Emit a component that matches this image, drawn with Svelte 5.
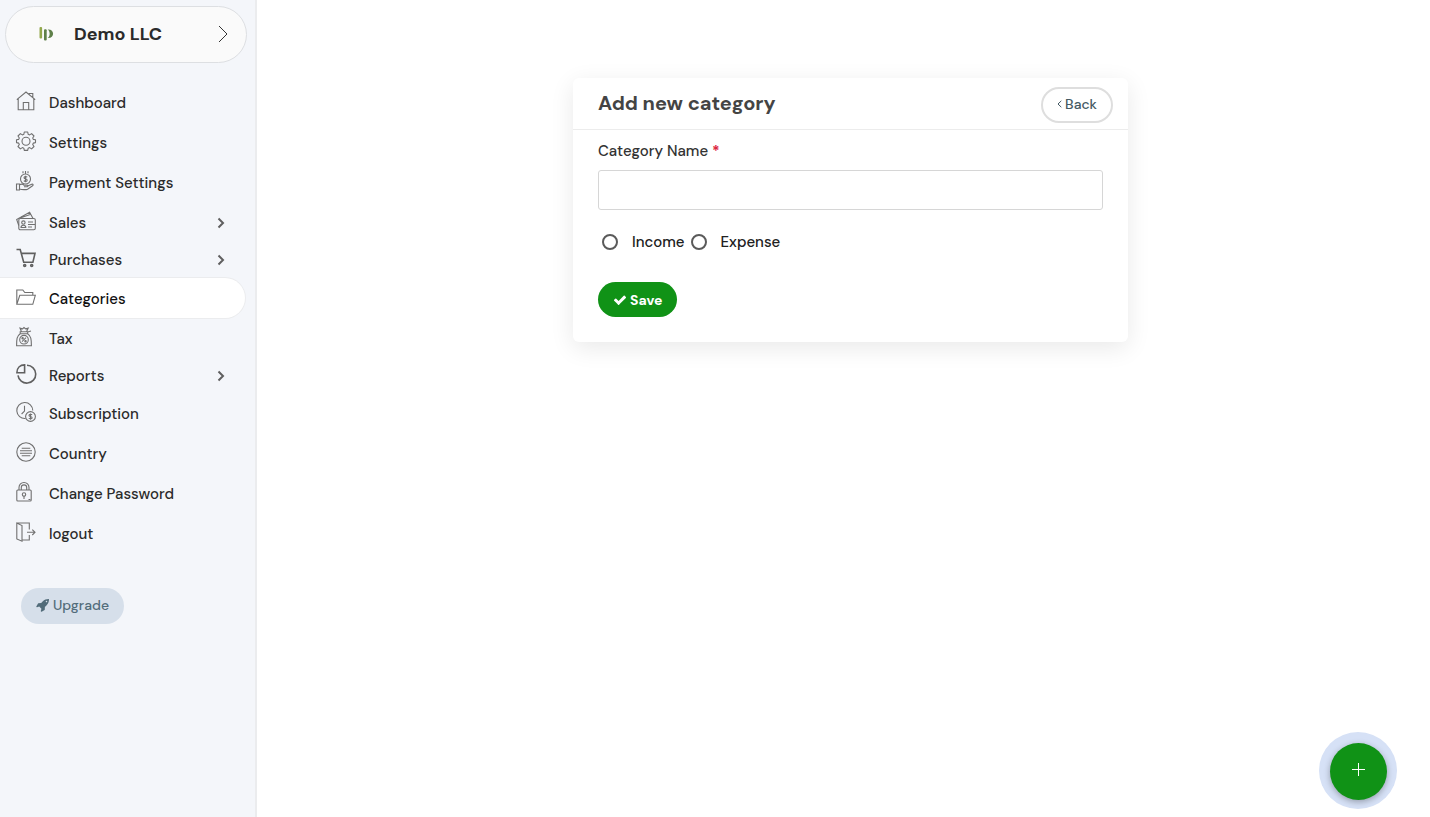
<script lang="ts">
  interface NavItem {
    label: string;
    icon: string;
    active?: boolean;
    submenu?: boolean;
    compact?: boolean;
  }

  const items: NavItem[] = [
    { label: 'Dashboard', icon: 'home' },
    { label: 'Settings', icon: 'gear' },
    { label: 'Payment Settings', icon: 'payment' },
    { label: 'Sales', icon: 'sales', submenu: true },
    { label: 'Purchases', icon: 'cart', submenu: true, compact: true },
    { label: 'Categories', icon: 'folder', active: true },
    { label: 'Tax', icon: 'tax' },
    { label: 'Reports', icon: 'chart', submenu: true, compact: true },
    { label: 'Subscription', icon: 'subscription' },
    { label: 'Country', icon: 'country' },
    { label: 'Change Password', icon: 'lock' },
    { label: 'logout', icon: 'logout' }
  ];

  let categoryName = $state('');
  let categoryType = $state('');
</script>

{#snippet navIcon(name: string)}
  <svg class="nav-icon" class:bold={name === 'cart' || name === 'chart'} viewBox="0 0 20 20" aria-hidden="true">
    {#if name === 'home'}
      <path d="M.8 8.6 10 1l9.2 7.6M2.2 7.6v11.1h15.6V7.6M7.3 18.7v-7.2h5.4v7.2M13.2 3.6V2.5h3.6v4" />
    {:else if name === 'gear'}
      <path d="M8.300 1h3.400l.5 2.300 1.400.6 2-1.300L18 5l-1.300 2 .6 1.400 2.200.4v2.800l-2.200.5-.6 1.400 1.300 2-2.400 2.400-2-1.300-1.400.6-.5 2.200H8.300l-.5-2.200-1.400-.6-2 1.300L2 15.500l1.300-2-.6-1.400-2.200-.5V8.800l2.200-.4L3.300 7 2 5l2.400-2.400 2 1.300 1.400-.6z" stroke-linejoin="round" />
      <circle cx="10" cy="10.200" r="4" />
    {:else if name === 'payment'}
      <circle cx="9.500" cy="8" r="5" />
      <path d="M7 .3v2M9.500 0v3M12 .3v2M11.200 6.200C10.600 5.300 8 5.300 8 6.800c0 1.400 3.200.8 3.200 2.400 0 1.400-2.600 1.500-3.300.4M9.500 4.700v6.600M.5 13h3v6h-3zM3.500 13.800c2-1 3.700-.7 4.700.5h3c1 0 1 1.500 0 1.500H8M11.700 15l4-1.700c1.300-.5 2 .7.900 1.400l-5 3.500c-1.200.6-5.600.7-8.100-.2" />
    {:else if name === 'sales'}
      <rect x="2.800" y="7.500" width="16.500" height="11.300" rx="1.500" />
      <path d="M2.800 14.500.7 8.600 13.600 1.300l3.300 5.900M3.400 7.200l10.800-3.600M5 16.500c0-3 4.800-3 4.800 0zM12 11h5M12 13.500h7M12 16h4" />
      <circle cx="7.400" cy="11.600" r="1.700" />
    {:else if name === 'cart'}
      <path d="M.5 1.500h3.700l3.500 12.700h9.200L19 5.400H5.400" />
      <circle cx="8.700" cy="17.500" r="1" />
      <circle cx="15.700" cy="17.500" r="1" />
    {:else if name === 'folder'}
      <path d="M.8 17.300V3h6l2 2.500h8v2.800M.8 17.300l3-9h15.500l-2.500 9z" />
    {:else if name === 'tax'}
      <path d="M4.200 6.800h7.400c3.400 2.300 3.800 5.500 3.800 12H.6c0-6.500.2-9.700 3.600-12zM4.200 4.800h7.500v2H4.200zM5.500 4.800 4 1.200l2.500.7L8 .5l1.700 1.400 2.500-.7-1.700 3.600M11.500 5l3.500-1" />
      <circle cx="8" cy="12.700" r="4.300" />
      <path d="m6 14.700 4-4" />
      <circle cx="6.600" cy="11.200" r=".7" />
      <circle cx="9.500" cy="14.200" r=".7" />
    {:else if name === 'chart'}
      <path d="M11 1.300A8.900 8.900 0 1 1 2 11.300M8.600.9C4 .9.900 4 .9 8.700h7.700z" />
    {:else if name === 'subscription'}
      <path d="M9.500 16.500a8 8 0 1 1 7.300-8M8.500 3.800v5.300L5.600 12" />
      <circle cx="14.500" cy="14.500" r="4.900" />
      <path d="M16.100 12.900c-.7-1-3.100-.8-3.100.5 0 1.500 3.100.7 3.100 2.300 0 1.400-2.600 1.400-3.200.3M14.500 11.500v6.200" />
    {:else if name === 'country'}
      <circle cx="10" cy="10" r="9.200" />
      <path d="M5.700 6.200h8.600M4 8.700h12M4 11.300h12M5.700 13.800h8.600" />
    {:else if name === 'lock'}
      <rect x=".8" y="8" width="14.400" height="11" rx="1" />
      <path d="M3 8V5.500a5 5 0 0 1 10 0V8M5.300 8V5.600a2.700 2.700 0 0 1 5.400 0V8M8 14v3M12.500 17.500h2" />
      <circle cx="8" cy="12.500" r="1.700" />
    {:else}
      <path d="M6 16.500v2.700L.8 17V1L6 3.500v13M.8 1h12.500v6.500M13.300 13v5H6M11 10.300h8M16.300 7.600l2.700 2.700-2.700 2.700" />
    {/if}
  </svg>
{/snippet}

<div class="layout">
  <aside class="sidebar">
    <button class="company" type="button">
      <svg class="logo" viewBox="0 0 16 16" aria-hidden="true">
        <rect x="1.500" y="1" width="2.600" height="11.500" rx="1" fill="#93a84c" />
        <rect x="6" y="3.300" width="2.700" height="11.200" rx="1" fill="#5f8049" />
        <path d="M9.700 3.500c7.200-.5 7.200 9 0 8.500 2.600-1.600 2.600-6.900 0-8.500z" fill="#5f8049" />
      </svg>
      <span class="company-name">Demo LLC</span>
      <svg class="company-arrow" viewBox="0 0 10 18" aria-hidden="true">
        <path d="m1 1 8 8-8 8" />
      </svg>
    </button>

    <nav>
      <ul>
        {#each items as item (item.label)}
          <li>
            <a href="#{item.icon}" class="nav-link" class:active={item.active} class:compact={item.compact}>
              {@render navIcon(item.icon)}
              <span class="nav-label">{item.label}</span>
              {#if item.submenu}
                <svg class="chevron" viewBox="0 0 8 12" aria-hidden="true">
                  <path d="m1.500 1.500 4.500 4.500-4.500 4.500" />
                </svg>
              {/if}
            </a>
          </li>
        {/each}
      </ul>
    </nav>

    <a href="#upgrade" class="upgrade">
      <svg viewBox="0 0 1792 1792" aria-hidden="true">
        <path d="M1440 448q0-40-28-68t-68-28-68 28-28 68 28 68 68 28 68-28 28-68zm224-288q0 249-75.500 430.500t-253.500 360.500q-81 80-195 176l-20 379q-2 16-16 26l-384 224q-7 4-16 4-12 0-23-9l-64-64q-13-14-8-32l85-276-281-281-276 85q-3 1-9 1-14 0-23-9l-64-64q-17-19-5-39l224-384q10-14 26-16l379-20q96-114 176-195 188-187 358-258t431-71q14 0 24 9.500t10 22.500z" />
      </svg>
      Upgrade
    </a>
  </aside>

  <main>
    <section class="card">
      <header class="card-header">
        <h1>Add new category</h1>
        <a href="#back" class="back">
          <svg viewBox="0 0 5 8" aria-hidden="true"><path d="M4.300.8 1 4l3.300 3.200" /></svg>
          Back
        </a>
      </header>

      <form class="card-body" onsubmit={(e) => e.preventDefault()}>
        <label class="field-label" for="category-name">Category Name <span class="required">*</span></label>
        <input id="category-name" class="text-input" type="text" bind:value={categoryName} />

        <div class="radios">
          <label class="radio">
            <input type="radio" name="type" value="income" bind:group={categoryType} />
            Income
          </label>
          <label class="radio">
            <input type="radio" name="type" value="expense" bind:group={categoryType} />
            Expense
          </label>
        </div>

        <button class="save" type="submit">
          <svg viewBox="0 0 1792 1792" aria-hidden="true">
            <path d="M1671 566q0 40-28 68l-724 724-136 136q-28 28-68 28t-68-28l-136-136-362-362q-28-28-28-68t28-68l136-136q28-28 68-28t68 28l294 295 656-657q28-28 68-28t68 28l136 136q28 28 28 68z" />
          </svg>
          Save
        </button>
      </form>
    </section>
  </main>

  <div class="fab-ring">
    <button class="fab" type="button" aria-label="Add">
      <svg viewBox="0 0 13 13" aria-hidden="true"><path d="M6.500 0v13M0 6.500h13" /></svg>
    </button>
  </div>
</div>

<style>
  :global(body) {
    margin: 0;
    background: #fff;
  }

  .layout {
    display: flex;
    min-height: 100vh;
    font-family: "DM Sans", Inter, sans-serif;
    font-size: 15px;
    line-height: 20px;
    color: #2b2b2b;
  }

  .layout * {
    box-sizing: border-box;
  }

  button,
  input {
    font: inherit;
  }

  a {
    color: inherit;
    text-decoration: none;
  }

  svg {
    flex-shrink: 0;
  }

  .sidebar {
    width: 257px;
    flex-shrink: 0;
    padding-top: 6px;
    background: #f4f6fa;
    border-right: 2px solid #ebecee;
  }

  .company {
    display: flex;
    align-items: center;
    width: 242px;
    height: 57px;
    margin: 0 0 19px 5px;
    padding: 0 18px 1px 32px;
    background: #fafafa;
    border: 1px solid #dddfe2;
    border-radius: 30px;
    color: #2b2b2b;
    cursor: pointer;
  }

  .logo {
    width: 16px;
    height: 16px;
    margin-right: 20px;
  }

  .company-name {
    flex: 1;
    text-align: left;
    font-size: 18px;
    font-weight: 700;
  }

  .company-arrow {
    width: 10px;
    height: 18px;
    fill: none;
    stroke: #333;
  }

  ul {
    margin: 0;
    padding: 0;
    list-style: none;
  }

  .nav-link {
    display: flex;
    align-items: center;
    margin-right: 10px;
    padding: 11px 20px 9px 16px;
    border-radius: 0 20px 20px 0;
    font-weight: 500;
  }

  .nav-link.compact {
    padding-top: 8px;
    padding-bottom: 7px;
  }

  .nav-link.active {
    margin-top: 1px;
    background: #fff;
    box-shadow: 0 0 0 1px #ebecee;
    color: #111;
  }

  .nav-icon {
    width: 20px;
    height: 20px;
    margin: -4px 13px 0 0;
    fill: none;
    stroke: #707070;
    stroke-width: 1.1;
    overflow: visible;
  }

  .nav-icon.bold {
    stroke: #606060;
    stroke-width: 1.6;
  }

  .nav-label {
    flex: 1;
  }

  .chevron {
    width: 8px;
    height: 12px;
    fill: none;
    stroke: #5f5f5f;
    stroke-width: 2;
  }

  .upgrade {
    display: inline-flex;
    align-items: center;
    gap: 3px;
    height: 36px;
    margin: 35px 0 0 21px;
    padding: 0 15px 2px;
    border-radius: 18px;
    background: #d6dfea;
    color: #526c7a;
    font-size: 14px;
    font-weight: 500;
  }

  .upgrade svg,
  .save svg {
    width: 14px;
    height: 14px;
    fill: currentColor;
  }

  main {
    flex: 1;
    padding: 78px 0 0 14px;
  }

  .card {
    max-width: 555px;
    margin: 0 auto;
    background: #fff;
    border-radius: 6px;
    box-shadow: 0 6px 24px rgba(0, 0, 0, 0.09);
  }

  .card-header {
    display: flex;
    align-items: center;
    justify-content: space-between;
    height: 52px;
    padding: 2px 15px 0 25px;
    border-bottom: 1px solid #ececec;
  }

  h1 {
    margin: 0 0 4px;
    font-size: 20px;
    font-weight: 700;
    line-height: 24px;
    color: #444;
  }

  .back {
    display: flex;
    align-items: center;
    gap: 3px;
    height: 36px;
    padding: 0 14px 2px;
    border: 2px solid #dedede;
    border-radius: 18px;
    color: #455a64;
    font-size: 14px;
    font-weight: 500;
  }

  .back svg {
    width: 5px;
    height: 8px;
    fill: none;
    stroke: currentColor;
  }

  .card-body {
    padding: 10px 25px 25px;
  }

  .field-label {
    display: block;
    margin-bottom: 8px;
    line-height: 22px;
    font-weight: 500;
    color: #333;
  }

  .required {
    color: #dc2740;
    font-weight: 700;
  }

  .text-input {
    display: block;
    width: 100%;
    height: 40px;
    padding: 0 12px;
    border: 1px solid #d6d6d6;
    border-radius: 3px;
    background: #fff;
  }

  .radios {
    display: flex;
    gap: 6px;
    margin: 20px 0 28px;
    padding-left: 4px;
  }

  .radio {
    display: flex;
    align-items: center;
    gap: 14px;
    height: 24px;
    font-weight: 500;
    color: #212121;
  }

  .radio input {
    appearance: none;
    width: 16px;
    height: 16px;
    margin: 0;
    border: 2px solid #5a5a5a;
    border-radius: 50%;
  }

  .radio input:checked {
    border-width: 5px;
    border-color: #109216;
  }

  .save {
    display: flex;
    align-items: center;
    gap: 3px;
    height: 35px;
    padding: 0 15px;
    border: 0;
    border-radius: 18px;
    background: #109216;
    color: #fff;
    font-size: 14px;
    font-weight: 700;
    cursor: pointer;
  }

  .fab-ring {
    position: fixed;
    right: 33px;
    bottom: 8px;
    padding: 11px 10px 9px 11px;
    border-radius: 50%;
    background: #d6e1f6;
  }

  .fab {
    display: flex;
    align-items: center;
    justify-content: center;
    width: 57px;
    height: 57px;
    padding: 0 0 4px;
    border: 0;
    border-radius: 50%;
    background: #109216;
    box-shadow: 0 2px 6px rgba(0, 0, 0, 0.3);
    cursor: pointer;
  }

  .fab svg {
    width: 13px;
    height: 13px;
    stroke: #fff;
  }
</style>
